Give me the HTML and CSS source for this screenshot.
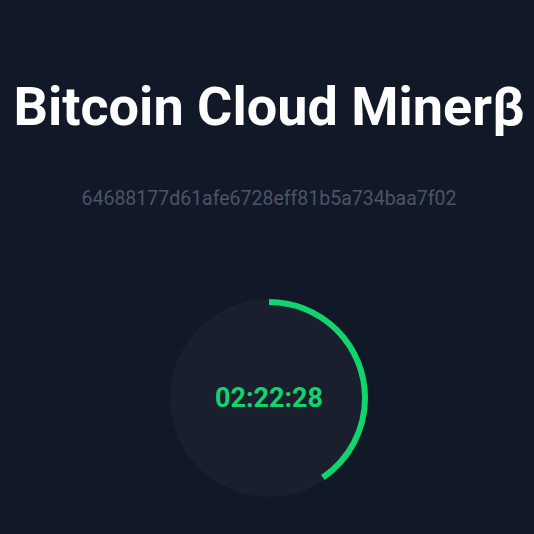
FILE: index.html
```html
<!DOCTYPE html>
<html lang="en">
<head>
  <meta charset="UTF-8">
  <title>Bitcoin Cloud Miner</title>
  <link rel="stylesheet" href="styles.css">
</head>
<body>
  <div class="container">
    <h1 class="title">Bitcoin Cloud Minerβ</h1>
    <p class="hash">64688177d61afe6728eff81b5a734baa7f02</p>

    <div class="timer">
      <svg class="ring" width="200" height="200" viewBox="0 0 200 200">
        <circle cx="100" cy="100" r="99" fill="#1a1f2d"></circle>
        <circle cx="100" cy="100" r="96" fill="none" stroke="#12d36e" stroke-width="6"
                stroke-dasharray="244 610" transform="rotate(-90 100 100)"></circle>
      </svg>
      <span class="time">02:22:28</span>
    </div>
  </div>
</body>
</html>
```

FILE: styles.css
```css
body {
  margin: 0;
  padding: 0;
  background-color: #111827;
  font-family: Roboto, "Noto Sans", sans-serif;
}
.container {
  display: flex;
  flex-direction: column;
  align-items: center;
  padding: 75px 0 0 4px;
}
.title {
  color: #ffffff;
  font-size: 54px;
  font-weight: bold;
  line-height: 64px;
  margin: 0;
  white-space: nowrap;
}
.hash {
  color: #4b5563;
  font-size: 19.5px;
  line-height: 23px;
  margin: 48px 0 0 0;
}
.timer {
  position: relative;
  width: 200px;
  height: 200px;
  margin-top: 88px;
}
.ring {
  display: block;
}
.time {
  position: absolute;
  top: 0;
  left: 0;
  width: 100%;
  height: 100%;
  display: flex;
  align-items: center;
  justify-content: center;
  color: #12d36e;
  font-size: 27px;
  font-weight: bold;
}
```
